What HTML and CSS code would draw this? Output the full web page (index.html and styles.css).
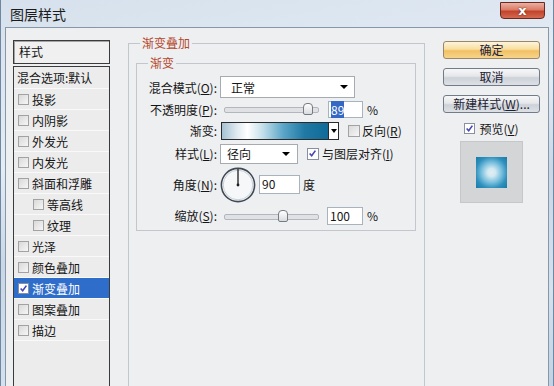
FILE: index.html
```html
<!DOCTYPE html>
<html lang="zh-CN">

<head>
    <meta charset="UTF-8">
    <title>图层样式</title>
    <link rel="stylesheet" href="styles.css">
</head>

<body>
    <div class="window">
        <div class="titlebar">
            <span class="title">图层样式</span>
            <button class="close">x</button>
        </div>

        <div class="content">
            <!-- Lista de estilos -->
            <div class="sidebar">
                <div class="list-head">样式</div>
                <ul class="layer-styles">
                    <li class="blend">混合选项:默认</li>
                    <li><span class="check"></span>投影</li>
                    <li><span class="check"></span>内阴影</li>
                    <li><span class="check"></span>外发光</li>
                    <li><span class="check"></span>内发光</li>
                    <li><span class="check"></span>斜面和浮雕</li>
                    <li class="sub"><span class="check"></span>等高线</li>
                    <li class="sub"><span class="check"></span>纹理</li>
                    <li><span class="check"></span>光泽</li>
                    <li><span class="check"></span>颜色叠加</li>
                    <li class="selected">
                        <span class="check on"><svg viewBox="0 0 11 11"><path d="M2 5.5 L4.5 8.2 L9 2"/></svg></span>渐变叠加
                    </li>
                    <li><span class="check"></span>图案叠加</li>
                    <li><span class="check"></span>描边</li>
                </ul>
            </div>

            <!-- Painel principal -->
            <fieldset class="panel">
                <legend>渐变叠加</legend>
                <fieldset class="group">
                    <legend>渐变</legend>
                    <div class="form">
                        <label class="lbl">混合模式(<u>O</u>):</label>
                        <div class="ctl">
                            <div class="select blend-mode"><span>正常</span><span class="arrow"></span></div>
                        </div>

                        <label class="lbl">不透明度(<u>P</u>):</label>
                        <div class="ctl">
                            <div class="slider"><span class="thumb" style="left: 88%"></span></div>
                            <div class="field opacity"><span class="sel">89</span></div>
                            <span class="unit">%</span>
                        </div>

                        <label class="lbl">渐变:</label>
                        <div class="ctl">
                            <div class="gradient">
                                <div class="ramp"></div>
                                <div class="drop"><span class="arrow"></span></div>
                            </div>
                            <span class="box reverse"></span>
                            <span>反向(<u>R</u>)</span>
                        </div>

                        <label class="lbl">样式(<u>L</u>):</label>
                        <div class="ctl">
                            <div class="select style-type"><span>径向</span><span class="arrow"></span></div>
                            <span class="box align on"><svg viewBox="0 0 11 11"><path d="M2 5.5 L4.5 8.2 L9 2"/></svg></span>
                            <span>与图层对齐(<u>I</u>)</span>
                        </div>

                        <label class="lbl">角度(<u>N</u>):</label>
                        <div class="ctl">
                            <svg class="dial" width="36" height="36" viewBox="0 0 36 36">
                                <circle cx="18" cy="18" r="16.6" fill="#f6f7f9" stroke="#3f4a56" stroke-width="1.6"/>
                                <circle cx="18" cy="18" r="14.8" fill="none" stroke="#c9d0d8" stroke-width="1"/>
                                <line x1="18" y1="18" x2="18" y2="2" stroke="#1e1e1e" stroke-width="1.3"/>
                                <circle cx="18" cy="18" r="1.4" fill="#1e1e1e"/>
                            </svg>
                            <div class="field angle">90</div>
                            <span class="unit deg">度</span>
                        </div>

                        <label class="lbl">缩放(<u>S</u>):</label>
                        <div class="ctl">
                            <div class="slider"><span class="thumb" style="left: 62%"></span></div>
                            <div class="field scale">100</div>
                            <span class="unit">%</span>
                        </div>
                    </div>
                </fieldset>
            </fieldset>

            <!-- Botões -->
            <div class="actions">
                <button class="btn default">确定</button>
                <button class="btn">取消</button>
                <button class="btn">新建样式(<u>W</u>)...</button>
                <div class="preview-check">
                    <span class="box on"><svg viewBox="0 0 11 11"><path d="M2 5.5 L4.5 8.2 L9 2"/></svg></span>
                    <span>预览(<u>V</u>)</span>
                </div>
                <div class="preview">
                    <div class="swatch"></div>
                </div>
            </div>
        </div>
    </div>
</body>

</html>
```

FILE: styles.css
```css
* {
    box-sizing: border-box;
}

html,
body {
    margin: 0;
    padding: 0;
}

body {
    width: 554px;
    height: 386px;
    overflow: hidden;
    font-family: "Noto Sans CJK SC", "Liberation Sans", sans-serif;
    font-size: 12px;
    color: #151515;
}

u {
    text-decoration: underline;
    text-underline-offset: 1px;
}

.window {
    height: 386px;
    overflow: hidden;
    display: flex;
    flex-direction: column;
    padding: 0 4px;
    border-left: 1px solid #6f87a0;
    border-right: 1px solid #6f87a0;
    background: linear-gradient(170deg, #d6e1ed 0%, #e4ecf4 35%, #c9d7e6 55%, #d5e1ed 80%, #c0d2e5 100%);
}

/* Barra de título */
.titlebar {
    height: 27px;
    flex: none;
    display: flex;
    justify-content: space-between;
    align-items: flex-start;
}

.title {
    padding: 5px 0 0 5px;
    font-size: 14px;
    line-height: 18px;
    color: #1b1b1b;
}

.close {
    width: 45px;
    height: 17px;
    margin: 2px 4px 0 0;
    padding: 0;
    border: 1px solid #6b2a20;
    border-radius: 0 0 4px 4px;
    background: linear-gradient(#eab0a2, #dc7b66 45%, #c2432c 55%, #d36a50);
    color: #fff;
    font: bold 13px "DejaVu Sans", sans-serif;
    line-height: 13px;
    text-shadow: 0 0 2px #5a1a10;
}

.content {
    flex: none;
    height: 380px;
    display: flex;
    align-items: flex-start;
    border: 1px solid #8797aa;
    background-color: #eeeff1;
}

/* Lista de estilos */
.sidebar {
    width: 97px;
    height: 400px;
    margin: 12px 0 0 7px;
    display: flex;
    flex-direction: column;
}

.list-head {
    height: 24px;
    padding-left: 5px;
    line-height: 22px;
    border: 1px solid #3b3b3b;
    box-shadow: inset 1px 1px 0 #a4a4a4;
    background-color: #f0f0f0;
}

.layer-styles {
    flex: 1;
    list-style: none;
    margin: 2px 0 0;
    padding: 0;
    border: 1px solid #3b3b3b;
    background-color: #ececec;
}

.layer-styles li {
    height: 21px;
    display: flex;
    align-items: center;
    padding-left: 4px;
    border-bottom: 1px solid #f9f9f9;
    white-space: nowrap;
}

.layer-styles li.blend {
    height: 22px;
    padding-left: 3px;
}

.layer-styles li.sub {
    padding-left: 19px;
}

.layer-styles li.selected {
    background-color: #2f6dca;
    color: #fff;
}

.check,
.box {
    width: 11px;
    height: 11px;
    flex: none;
    margin-right: 3px;
    border: 1px solid #a2a2a2;
    background: linear-gradient(135deg, #d9d9d9, #f6f6f6);
}

.check.on,
.box.on {
    background: #fff;
    border-color: #8a8fa0;
}

.check svg,
.box svg {
    display: block;
    width: 9px;
    height: 9px;
}

.check path,
.box path {
    fill: none;
    stroke: #4646b8;
    stroke-width: 2;
}

/* Painel principal */
.panel {
    width: 297px;
    height: 400px;
    min-width: 0;
    margin: 8px 0 0 18px;
    padding: 0 8px 0 7px;
    border: 1px solid #c3c7cd;
}

.panel legend {
    padding: 0 2px;
    font-size: 12px;
    line-height: 14px;
    color: #b4472c;
}

.panel > legend {
    margin-left: 4px;
}

.group {
    width: 280px;
    min-width: 0;
    margin: 6px 0 0;
    padding: 6px 0 2px;
    border: 1px solid #c3c7cd;
}

.group > legend {
    margin-left: 11px;
}

.form {
    display: grid;
    grid-template-columns: 80px auto;
    grid-template-rows: 22px 22px 21px 25px 37px 25px;
    column-gap: 3px;
    align-items: center;
}

.lbl {
    text-align: right;
    white-space: nowrap;
}

.ctl {
    display: flex;
    align-items: center;
    white-space: nowrap;
}

.select {
    display: flex;
    align-items: center;
    justify-content: space-between;
    background-color: #fff;
    border: 1px solid #a6abb2;
}

.blend-mode {
    width: 135px;
    height: 22px;
    padding: 0 6px 0 10px;
}

.style-type {
    width: 78px;
    height: 20px;
    padding: 0 7px 0 6px;
}

.arrow {
    width: 0;
    height: 0;
    border-left: 4px solid transparent;
    border-right: 4px solid transparent;
    border-top: 4px solid #000;
}

.slider {
    position: relative;
    width: 95px;
    height: 14px;
    margin-left: 4px;
}

.slider::before {
    content: "";
    position: absolute;
    left: 0;
    right: 0;
    top: 5px;
    height: 4px;
    border: 1px solid #b3b7bd;
    border-radius: 2px;
    background-color: #dfe1e4;
}

.thumb {
    position: absolute;
    top: 1px;
    width: 10px;
    height: 12px;
    margin-left: -5px;
    border: 1px solid #767b82;
    border-radius: 4px 4px 2px 2px;
    background: linear-gradient(#ffffff, #d9dbde);
}

.field {
    height: 18px;
    padding-left: 2px;
    line-height: 16px;
    background-color: #fff;
    border: 1px solid #a9b3bd;
}

.opacity {
    width: 35px;
    height: 17px;
    margin-left: 9px;
    line-height: 15px;
}

.sel {
    background-color: #3468c4;
    color: #fff;
}

.scale {
    width: 36px;
    margin-left: 8px;
}

.angle {
    width: 41px;
    height: 19px;
    margin-left: 3px;
}

.unit {
    margin-left: 4px;
}

.unit.deg {
    margin-left: 3px;
}

.gradient {
    width: 118px;
    height: 18px;
    margin-left: 1px;
    display: flex;
    border: 1px solid #2a2a2a;
}

.ramp {
    flex: 1;
    background: linear-gradient(to right, #a4c3d3 0%, #dfeaf0 14%, #ffffff 24%, #c6e0ea 38%, #5aa5c8 58%, #1f79a3 78%, #106b98 100%);
}

.drop {
    width: 10px;
    display: flex;
    align-items: center;
    justify-content: center;
    background-color: #fff;
    border-left: 1px solid #2a2a2a;
}

.drop .arrow {
    border-left-width: 3px;
    border-right-width: 3px;
}

.reverse {
    width: 12px;
    height: 12px;
    margin: 0 2px 0 9px;
}

.align {
    width: 12px;
    height: 12px;
    margin: 0 3px 0 9px;
}

.dial {
    display: block;
}

/* Botões */
.actions {
    width: 97px;
    margin: 13px 0 0 18px;
    display: flex;
    flex-direction: column;
    align-items: center;
}

.btn {
    width: 97px;
    height: 18px;
    margin-bottom: 9px;
    padding: 0;
    border: 1px solid #727c88;
    border-radius: 3px;
    background: linear-gradient(#f7f7f8, #e5e7ea 45%, #cdd2d8 55%, #dde1e6);
    font: inherit;
    line-height: 16px;
    color: #1c2030;
}

.btn.default {
    border-color: #9a876a;
    background: linear-gradient(#fdf4da, #f9df9f 45%, #f2c064 55%, #f6d58b);
    color: #1c2344;
}

.preview-check {
    height: 13px;
    display: flex;
    align-items: center;
}

.preview-check .box {
    margin-right: 4px;
}

.preview {
    width: 63px;
    height: 62px;
    margin-top: 6px;
    display: flex;
    align-items: center;
    justify-content: center;
    background-color: #d4d5d7;
    border: 1px solid #c6c7c9;
}

.swatch {
    width: 31px;
    height: 31px;
    background: radial-gradient(circle, #e6ecef 0%, #d2e9f2 18%, #7cc1de 45%, #2f90bd 72%, #167aa8 100%);
}
```
